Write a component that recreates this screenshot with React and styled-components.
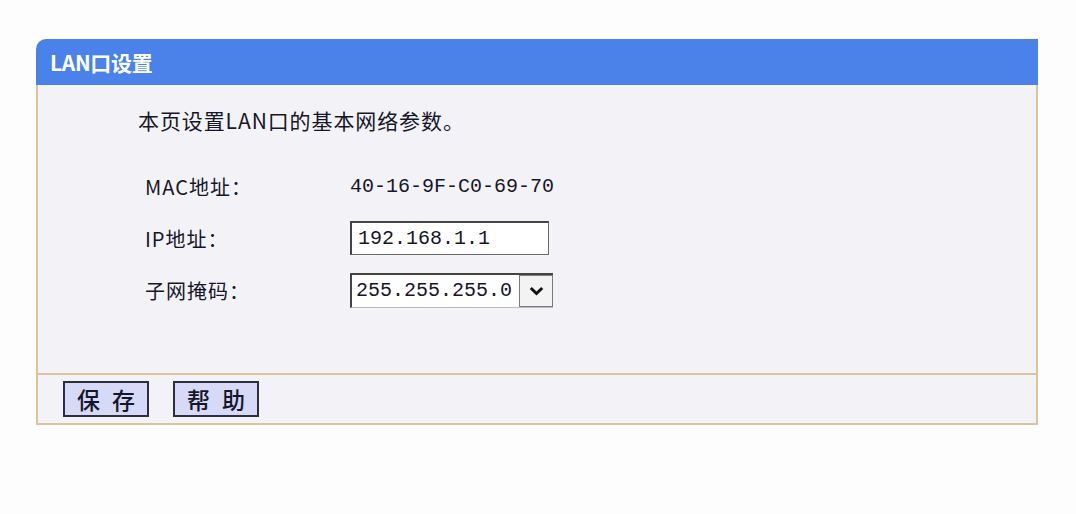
import React from "react";
import styled, { createGlobalStyle } from "styled-components";

const GlobalStyle = createGlobalStyle`
  body {
    margin: 0;
    background: #fdfdfe;
    font-family: "Noto Sans CJK SC", "Noto Sans", sans-serif;
    color: #16162a;
  }
`;

const Page = styled.div`
  width: 1076px;
  height: 514px;
  padding: 39px 0 0 36px;
  box-sizing: border-box;
`;

const Panel = styled.div`
  width: 1002px;
`;

const Header = styled.div`
  height: 46px;
  background: #4a82ea;
  border-top-left-radius: 10px;
  padding-left: 14px;
  display: flex;
  align-items: center;
  color: #fff;
  font-size: 21px;
  font-weight: 700;
  letter-spacing: -0.3px;
`;

const Body = styled.div`
  background: #f3f3f7;
  border-left: 2px solid #dcc39c;
  border-right: 2px solid #dcc39c;
  height: 288px;
  box-sizing: border-box;
  padding: 20px 0 0 100px;
`;

const Intro = styled.div`
  font-size: 21px;
  line-height: 30px;
  letter-spacing: 0.9px;
`;

const Form = styled.div`
  display: grid;
  grid-template-columns: 205px auto;
  grid-auto-rows: 36px;
  row-gap: 16px;
  margin: 33px 0 0 7px;
  align-items: center;
`;

const Label = styled.div`
  font-size: 20px;
  letter-spacing: 1px;
`;

const Value = styled.div`
  font-family: "Liberation Mono", monospace;
  font-size: 20px;
`;

const TextInput = styled.div`
  width: 199px;
  height: 34px;
  box-sizing: border-box;
  background: #fff;
  border: 1px solid #6a6a6a;
  border-top: 2px solid #444;
  border-left: 2px solid #444;
  font-family: "Liberation Mono", monospace;
  font-size: 20px;
  display: flex;
  align-items: center;
  padding-left: 6px;
`;

const Select = styled.div`
  width: 203px;
  height: 35px;
  box-sizing: border-box;
  background: #fff;
  border-top: 2px solid #444;
  border-left: 2px solid #444;
  border-bottom: 1px solid #bbb;
  display: flex;
`;

const SelectText = styled.div`
  flex: 1;
  font-family: "Liberation Mono", monospace;
  font-size: 20px;
  display: flex;
  align-items: center;
  padding-left: 4px;
`;

const SelectButton = styled.div`
  width: 34px;
  box-sizing: border-box;
  background: #f3f3f3;
  border: 1px solid #7a7a7a;
  display: flex;
  align-items: center;
  justify-content: center;
`;

const Footer = styled.div`
  background: #f3f3f7;
  border: 2px solid #dcc39c;
  height: 52px;
  box-sizing: border-box;
  display: flex;
  align-items: center;
  gap: 24px;
  padding-left: 25px;
`;

const Button = styled.button`
  width: ${(p) => p.$w}px;
  height: 36px;
  background: #d6daf6;
  border: 2px solid #2e2e40;
  font-family: "Noto Sans CJK SC", sans-serif;
  font-size: 23px;
  font-weight: 500;
  color: #16162a;
  letter-spacing: 12px;
  padding: 0 0 0 12px;
  display: flex;
  align-items: center;
  justify-content: center;
`;

export default function App() {
  return (
    <Page>
      <GlobalStyle />
      <Panel>
        <Header>LAN口设置</Header>
        <Body>
          <Intro>本页设置LAN口的基本网络参数。</Intro>
          <Form>
            <Label>MAC地址：</Label>
            <Value>40-16-9F-C0-69-70</Value>
            <Label>IP地址：</Label>
            <TextInput>192.168.1.1</TextInput>
            <Label>子网掩码：</Label>
            <Select>
              <SelectText>255.255.255.0</SelectText>
              <SelectButton>
                <svg width="15" height="10" viewBox="0 0 15 10">
                  <polyline
                    points="1.8,2 7.5,7.5 13.2,2"
                    fill="none"
                    stroke="#111"
                    strokeWidth="3"
                  />
                </svg>
              </SelectButton>
            </Select>
          </Form>
        </Body>
        <Footer>
          <Button $w={86}>保存</Button>
          <Button $w={86}>帮助</Button>
        </Footer>
      </Panel>
    </Page>
  );
}
